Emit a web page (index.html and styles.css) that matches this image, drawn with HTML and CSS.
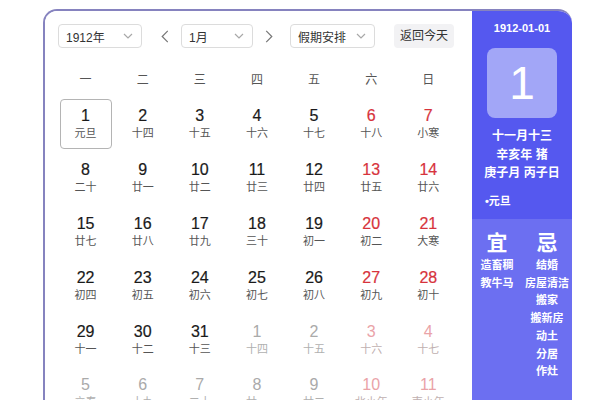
FILE: index.html
```html
<!DOCTYPE html>
<html lang="zh">
<head>
<meta charset="utf-8">
<title>万年历</title>
<link rel="stylesheet" href="styles.css">
</head>
<body>
<div class="cal">
  <div class="main">
    <div class="toolbar">
      <div class="select sel-year"><span>1912年</span><svg class="chev" viewBox="0 0 10 6"><polyline points="1,1 5,5 9,1"/></svg></div>
      <svg class="arrow arrow-l" viewBox="0 0 8 14"><polyline points="7,1 1,7 7,13"/></svg>
      <div class="select sel-month"><span>1月</span><svg class="chev" viewBox="0 0 10 6"><polyline points="1,1 5,5 9,1"/></svg></div>
      <svg class="arrow arrow-r" viewBox="0 0 8 14"><polyline points="1,1 7,7 1,13"/></svg>
      <div class="select sel-hol"><span>假期安排</span><svg class="chev" viewBox="0 0 10 6"><polyline points="1,1 5,5 9,1"/></svg></div>
      <div class="today-btn">返回今天</div>
    </div>
    <div class="weekdays">
      <div>一</div><div>二</div><div>三</div><div>四</div><div>五</div><div>六</div><div>日</div>
    </div>
    <div class="grid">
      <div class="cell sel"><b>1</b><i>元旦</i></div>
      <div class="cell"><b>2</b><i>十四</i></div>
      <div class="cell"><b>3</b><i>十五</i></div>
      <div class="cell"><b>4</b><i>十六</i></div>
      <div class="cell"><b>5</b><i>十七</i></div>
      <div class="cell we"><b>6</b><i>十八</i></div>
      <div class="cell we"><b>7</b><i>小寒</i></div>

      <div class="cell"><b>8</b><i>二十</i></div>
      <div class="cell"><b>9</b><i>廿一</i></div>
      <div class="cell"><b>10</b><i>廿二</i></div>
      <div class="cell"><b>11</b><i>廿三</i></div>
      <div class="cell"><b>12</b><i>廿四</i></div>
      <div class="cell we"><b>13</b><i>廿五</i></div>
      <div class="cell we"><b>14</b><i>廿六</i></div>

      <div class="cell"><b>15</b><i>廿七</i></div>
      <div class="cell"><b>16</b><i>廿八</i></div>
      <div class="cell"><b>17</b><i>廿九</i></div>
      <div class="cell"><b>18</b><i>三十</i></div>
      <div class="cell"><b>19</b><i>初一</i></div>
      <div class="cell we"><b>20</b><i>初二</i></div>
      <div class="cell we"><b>21</b><i>大寒</i></div>

      <div class="cell"><b>22</b><i>初四</i></div>
      <div class="cell"><b>23</b><i>初五</i></div>
      <div class="cell"><b>24</b><i>初六</i></div>
      <div class="cell"><b>25</b><i>初七</i></div>
      <div class="cell"><b>26</b><i>初八</i></div>
      <div class="cell we"><b>27</b><i>初九</i></div>
      <div class="cell we"><b>28</b><i>初十</i></div>

      <div class="cell"><b>29</b><i>十一</i></div>
      <div class="cell"><b>30</b><i>十二</i></div>
      <div class="cell"><b>31</b><i>十三</i></div>
      <div class="cell other"><b>1</b><i>十四</i></div>
      <div class="cell other"><b>2</b><i>十五</i></div>
      <div class="cell other we"><b>3</b><i>十六</i></div>
      <div class="cell other we"><b>4</b><i>十七</i></div>

      <div class="cell other"><b>5</b><i>立春</i></div>
      <div class="cell other"><b>6</b><i>十九</i></div>
      <div class="cell other"><b>7</b><i>二十</i></div>
      <div class="cell other"><b>8</b><i>廿一</i></div>
      <div class="cell other"><b>9</b><i>廿二</i></div>
      <div class="cell other we"><b>10</b><i>北小年</i></div>
      <div class="cell other we"><b>11</b><i>南小年</i></div>
    </div>
  </div>
  <div class="side">
    <div class="side-top">
      <div class="side-date">1912-01-01</div>
      <div class="big-day">1</div>
      <div class="lunar-info">
        <div>十一月十三</div>
        <div>辛亥年 猪</div>
        <div>庚子月 丙子日</div>
      </div>
      <div class="festival">•元旦</div>
    </div>
    <div class="side-bottom">
      <div class="col">
        <div class="col-title">宜</div>
        <div>造畜稠</div>
        <div>教牛马</div>
      </div>
      <div class="col">
        <div class="col-title">忌</div>
        <div>结婚</div>
        <div>房屋清洁</div>
        <div>搬家</div>
        <div>搬新房</div>
        <div>动土</div>
        <div>分居</div>
        <div>作灶</div>
      </div>
    </div>
  </div>
</div>
</body>
</html>
```

FILE: styles.css
```css
html, body {
  margin: 0;
  padding: 0;
  background: #ffffff;
  width: 600px;
  height: 400px;
  overflow: hidden;
}

body {
  font-family: "Liberation Sans", "Noto Sans CJK SC", sans-serif;
  color: #222;
}

.cal {
  display: flex;
  margin: 9px 0 0 43px;
  width: 529px;
  height: 420px;
  border: 2px solid #8683bf;
  border-right: none;
  border-bottom: none;
  border-radius: 14px 14px 0 0;
  overflow: hidden;
  box-sizing: border-box;
}

.main {
  width: 427px;
  flex: none;
  background: #fff;
}

.toolbar {
  display: flex;
  align-items: center;
  height: 24px;
  margin: 13px 0 0 13px;
}

.select {
  display: flex;
  align-items: center;
  justify-content: space-between;
  height: 24px;
  box-sizing: border-box;
  border: 1px solid #dcdcdc;
  border-radius: 4px;
  padding: 0 8px 0 7px;
  font-size: 12px;
  color: #333;
}

.sel-year { width: 84px; }
.sel-month { width: 72px; }
.sel-hol { width: 85px; }

.chev {
  width: 10px;
  height: 6px;
  fill: none;
  stroke: #a8a8a8;
  stroke-width: 1.2;
}

.arrow {
  width: 8px;
  height: 13px;
  fill: none;
  stroke: #777;
  stroke-width: 1.3;
}

.arrow-l { margin: 0 12px 0 19px; }
.arrow-r { margin: 0 17px 0 12px; }

.today-btn {
  margin-left: 19px;
  width: 60px;
  height: 24px;
  line-height: 24px;
  text-align: center;
  background: #f2f2f4;
  border-radius: 4px;
  font-size: 12px;
  color: #333;
}

.weekdays {
  display: grid;
  grid-template-columns: repeat(7, 57.14px);
  margin: 20px 0 0 12px;
  height: 24px;
  line-height: 24px;
  font-size: 12px;
  color: #555;
  text-align: center;
}

.grid {
  display: grid;
  grid-template-columns: repeat(7, 57.14px);
  grid-auto-rows: 53.8px;
  margin: 5px 0 0 12px;
}

.cell {
  display: flex;
  flex-direction: column;
  align-items: center;
  justify-content: center;
  margin: 2px 2.5px;
  border-radius: 4px;
  border: 1.5px solid transparent;
}

.cell b {
  font-weight: normal;
  font-size: 16px;
  line-height: 18px;
  color: #1a1a1a;
  -webkit-text-stroke: 0.2px #1a1a1a;
}

.cell i {
  font-style: normal;
  font-size: 11px;
  line-height: 14px;
  margin-top: 1px;
  color: #555;
}

.cell.sel {
  border-color: #b4b4b4;
}

.cell.we b { color: #d7333c; -webkit-text-stroke-color: #d7333c; }

.cell.other b { color: #aaa; -webkit-text-stroke-width: 0; }
.cell.other i { color: #b0b0b0; }
.cell.other.we b { color: #eaa3a8; }
.cell.other.we i { color: #c0b0b0; }

.side {
  width: 100px;
  flex: none;
  margin-top: -2px;
  border-radius: 0 14px 0 0;
  overflow: hidden;
  color: #fff;
  text-align: center;
}

.side-top {
  background: #5558ef;
  height: 210px;
  padding-top: 12px;
  box-sizing: border-box;
}

.side-date {
  font-size: 11px;
  font-weight: bold;
  line-height: 14px;
}

.big-day {
  width: 70px;
  height: 70px;
  margin: 13px auto 0;
  background: #a2a6f7;
  border-radius: 8px;
  font-size: 46px;
  line-height: 70px;
}

.lunar-info {
  margin-top: 9px;
  font-size: 12px;
  line-height: 18.5px;
  font-weight: bold;
}

.festival {
  text-align: left;
  padding-left: 13px;
  margin-top: 11px;
  font-size: 11px;
  line-height: 14px;
  font-weight: bold;
}

.side-bottom {
  background: #6c6ff1;
  height: 200px;
  display: flex;
  padding-top: 13px;
  box-sizing: border-box;
}

.col {
  width: 50px;
  font-size: 11px;
  line-height: 17.7px;
  font-weight: bold;
}

.col-title {
  font-size: 21px;
  line-height: 22px;
  font-weight: bold;
  margin-bottom: 3px;
}
```
